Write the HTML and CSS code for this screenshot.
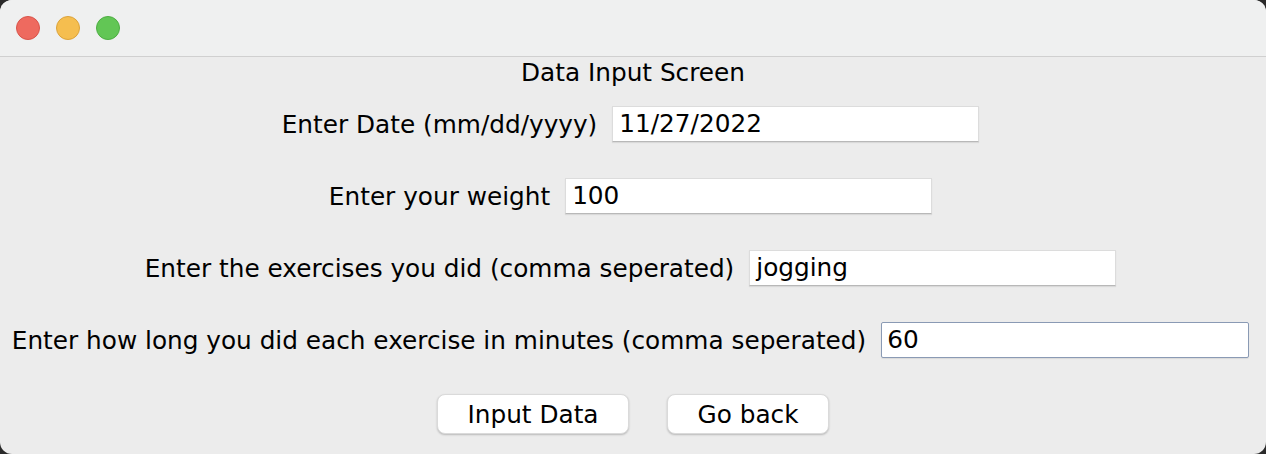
FILE: index.html
```html
<!DOCTYPE html>
<html>
<head>
<meta charset="utf-8">
<link rel="stylesheet" href="styles.css">
</head>
<body>
<div class="window">
  <div class="titlebar">
    <span class="light red"></span>
    <span class="light yellow"></span>
    <span class="light green"></span>
  </div>
  <div class="content">
    <div class="heading">Data Input Screen</div>
    <div class="row field-row"><span class="label">Enter Date (mm/dd/yyyy)</span><div class="field">11/27/2022</div></div>
    <div class="row field-row"><span class="label">Enter your weight</span><div class="field">100</div></div>
    <div class="row field-row"><span class="label">Enter the exercises you did (comma seperated)</span><div class="field">jogging</div></div>
    <div class="row field-row"><span class="label">Enter how long you did each exercise in minutes (comma seperated)</span><div class="field focused">60</div></div>
    <div class="row buttons"><button class="btn btn-input">Input Data</button><button class="btn btn-back">Go back</button></div>
  </div>
</div>
</body>
</html>
```
FILE: styles.css
```css
html, body {
  margin: 0;
  padding: 0;
  background: #2a2a2a;
}
body {
  width: 1266px;
  height: 454px;
  overflow: hidden;
  font-family: "DejaVu Sans", "Liberation Sans", sans-serif;
  font-size: 24.75px;
  color: #000;
}
.window {
  width: 1266px;
  height: 454px;
  border-radius: 12px;
  overflow: hidden;
  background: #ececec;
  display: flex;
  flex-direction: column;
}
.titlebar {
  height: 56px;
  flex: none;
  background: #eff0f0;
  border-bottom: 1px solid #d0d0d0;
  display: flex;
  align-items: center;
  gap: 16px;
  padding-left: 16px;
}
.light {
  width: 24px;
  height: 24px;
  border-radius: 50%;
  box-sizing: border-box;
}
.red { background: #ee6a5f; border: 1px solid #d9544a; }
.yellow { background: #f5be4f; border: 1px solid #dca33a; }
.green { background: #62c655; border: 1px solid #4dae42; }
.content {
  flex: 1;
  display: flex;
  flex-direction: column;
  align-items: center;
  gap: 36px;
}
.heading {
  height: 32px;
  line-height: 32px;
  margin-bottom: -19px;
}
.row {
  display: flex;
  align-items: center;
  gap: 15px;
  height: 36px;
}
.field-row {
  padding-right: 5px;
}
.label {
  white-space: nowrap;
}
.field {
  width: 367px;
  height: 36px;
  box-sizing: border-box;
  background: #fff;
  border: 1px solid #dcdcdc;
  border-bottom-color: #b8b8b8;
  box-shadow: 0 1px 1px rgba(0,0,0,0.08);
  padding: 0 6px;
  line-height: 34px;
}
.field.focused {
  width: 368px;
  border: 1px solid #8a9ab4;
  border-radius: 2px;
  padding-left: 5px;
}
.buttons {
  gap: 38px;
  height: 40px;
}
.btn {
  font: inherit;
  color: #000;
  background: #fff;
  border: 1px solid #dadada;
  border-radius: 8px;
  box-shadow: 0 1px 2px rgba(0,0,0,0.22);
  height: 40px;
  padding: 0;
}
.btn-input { width: 192px; }
.btn-back { width: 162px; }
```
